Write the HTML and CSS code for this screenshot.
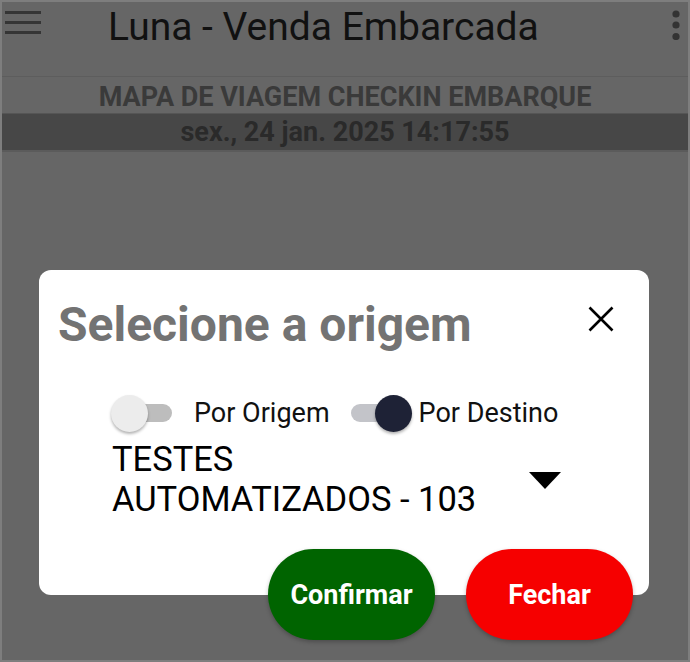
FILE: index.html
```html
<!DOCTYPE html>
<html lang="pt-BR">

<head>
    <meta charset="UTF-8">
    <meta name="viewport" content="width=device-width, initial-scale=1.0">
    <title>Luna - Venda Embarcada</title>
    <link rel="stylesheet" href="styles.css">
</head>

<body>
    <div class="screen">
        <header class="toolbar">
            <svg class="menu-icon" width="36" height="26" viewBox="0 0 36 26">
                <rect x="0" y="0" width="36" height="3" fill="#353535"></rect>
                <rect x="0" y="10" width="36" height="3" fill="#353535"></rect>
                <rect x="0" y="20" width="36" height="3" fill="#353535"></rect>
            </svg>
            <h1 class="title">Luna - Venda Embarcada</h1>
            <svg class="more-icon" width="8" height="30" viewBox="0 0 8 30">
                <circle cx="4" cy="4" r="3.6" fill="#333"></circle>
                <circle cx="4" cy="15" r="3.6" fill="#333"></circle>
                <circle cx="4" cy="26.5" r="3.6" fill="#333"></circle>
            </svg>
        </header>

        <div class="subtitle">MAPA DE VIAGEM CHECKIN EMBARQUE</div>
        <div class="date">sex., 24 jan. 2025 14:17:55</div>

        <div class="dialog">
            <div class="dialog-head">
                <h2 class="dialog-title">Selecione a origem</h2>
                <svg class="close-icon" width="26" height="26" viewBox="0 0 26 26">
                    <path d="M1.5 1.5 L24.5 24.5 M24.5 1.5 L1.5 24.5" stroke="#000" stroke-width="2.6" fill="none"></path>
                </svg>
            </div>
            <div class="divider"></div>

            <div class="filters">
                <label class="switch">
                    <span class="track"></span>
                    <span class="thumb"></span>
                </label>
                <span class="switch-label">Por Origem</span>
                <label class="switch on">
                    <span class="track"></span>
                    <span class="thumb"></span>
                </label>
                <span class="switch-label tight">Por Destino</span>
            </div>

            <div class="spinner">
                <span class="spinner-text">TESTES AUTOMATIZADOS - 103</span>
                <svg class="arrow" width="32" height="17" viewBox="0 0 32 17">
                    <path d="M0 0 L32 0 L16 17 Z" fill="#000"></path>
                </svg>
            </div>

            <div class="actions">
                <button class="btn confirm">Confirmar</button>
                <button class="btn close">Fechar</button>
            </div>
        </div>
    </div>
</body>

</html>
```

FILE: styles.css
```css
body {
    margin: 0;
    font-family: Roboto, "Liberation Sans", sans-serif;
}

.screen {
    position: relative;
    box-sizing: border-box;
    width: 690px;
    height: 662px;
    border: 2px solid #7e7e7e;
    background-color: #666666;
    overflow: hidden;
}

.toolbar {
    display: flex;
    align-items: flex-start;
    height: 74px;
    border-bottom: 1px solid #5d5d5d;
}

.menu-icon {
    margin: 9px 0 0 3px;
}

.title {
    flex: 1;
    margin: 6px 0 0 67px;
    font-size: 39px;
    line-height: 39px;
    font-weight: 400;
    color: #111111;
}

.more-icon {
    margin: 8px 8px 0 0;
}

.subtitle {
    height: 36px;
    line-height: 41px;
    text-align: center;
    font-size: 27px;
    font-weight: 700;
    color: #3a3a3a;
}

.date {
    height: 36px;
    line-height: 37px;
    border-top: 1px solid #555555;
    border-bottom: 2px solid #5b5b5b;
    background-color: #474747;
    text-align: center;
    font-size: 27px;
    font-weight: 700;
    color: #2a2a2a;
}

.dialog {
    position: absolute;
    left: 37px;
    top: 268px;
    width: 610px;
    height: 325px;
    border-radius: 12px;
    background-color: #ffffff;
    display: flex;
    flex-direction: column;
}

.dialog-head {
    display: flex;
    align-items: flex-start;
    justify-content: space-between;
    padding: 27px 35px 0 19px;
}

.dialog-title {
    margin: 0;
    font-size: 48px;
    line-height: 56px;
    font-weight: 700;
    color: #737373;
}

.close-icon {
    margin-top: 9px;
}

.divider {
    height: 3px;
    margin: 11px 20px 0 20px;
    background-color: #d6d6d6;
}

.filters {
    display: flex;
    align-items: center;
    height: 38px;
    margin-top: 30px;
    padding-left: 72px;
}

.switch {
    position: relative;
    display: block;
    width: 61px;
    height: 38px;
}

.track {
    position: absolute;
    left: 9px;
    right: 0;
    top: 10px;
    height: 18px;
    border-radius: 9px;
    background-color: #bdbdbd;
}

.thumb {
    position: absolute;
    left: 0;
    top: 1px;
    width: 37px;
    height: 37px;
    border-radius: 50%;
    background-color: #ececec;
    box-shadow: 0 2px 3px rgba(0, 0, 0, 0.3);
}

.switch.on .track {
    left: 0;
    right: 9px;
    background-color: #c3c4c9;
}

.switch.on .thumb {
    left: auto;
    right: 0;
    background-color: #1e2236;
}

.switch-label {
    margin: 0 21px 0 22px;
    font-size: 27px;
    color: #111111;
}

.switch-label.tight {
    margin-left: 7px;
}

.spinner {
    display: flex;
    align-items: center;
    justify-content: space-between;
    margin-top: 7px;
    padding: 0 88px 0 73px;
}

.spinner-text {
    width: 400px;
    font-size: 34.5px;
    line-height: 40px;
    color: #000000;
}

.arrow {
    margin-top: 2px;
}

.actions {
    display: flex;
    justify-content: flex-end;
    gap: 31px;
    margin-top: 30px;
    padding-right: 16px;
}

.btn {
    width: 167px;
    height: 91px;
    border: none;
    border-radius: 46px;
    font-family: Roboto, "Liberation Sans", sans-serif;
    font-size: 27px;
    font-weight: 700;
    color: #ffffff;
    box-shadow: 0 2px 4px rgba(0, 0, 0, 0.25);
}

.confirm {
    background-color: #006400;
}

.close {
    background-color: #f60000;
}
```
